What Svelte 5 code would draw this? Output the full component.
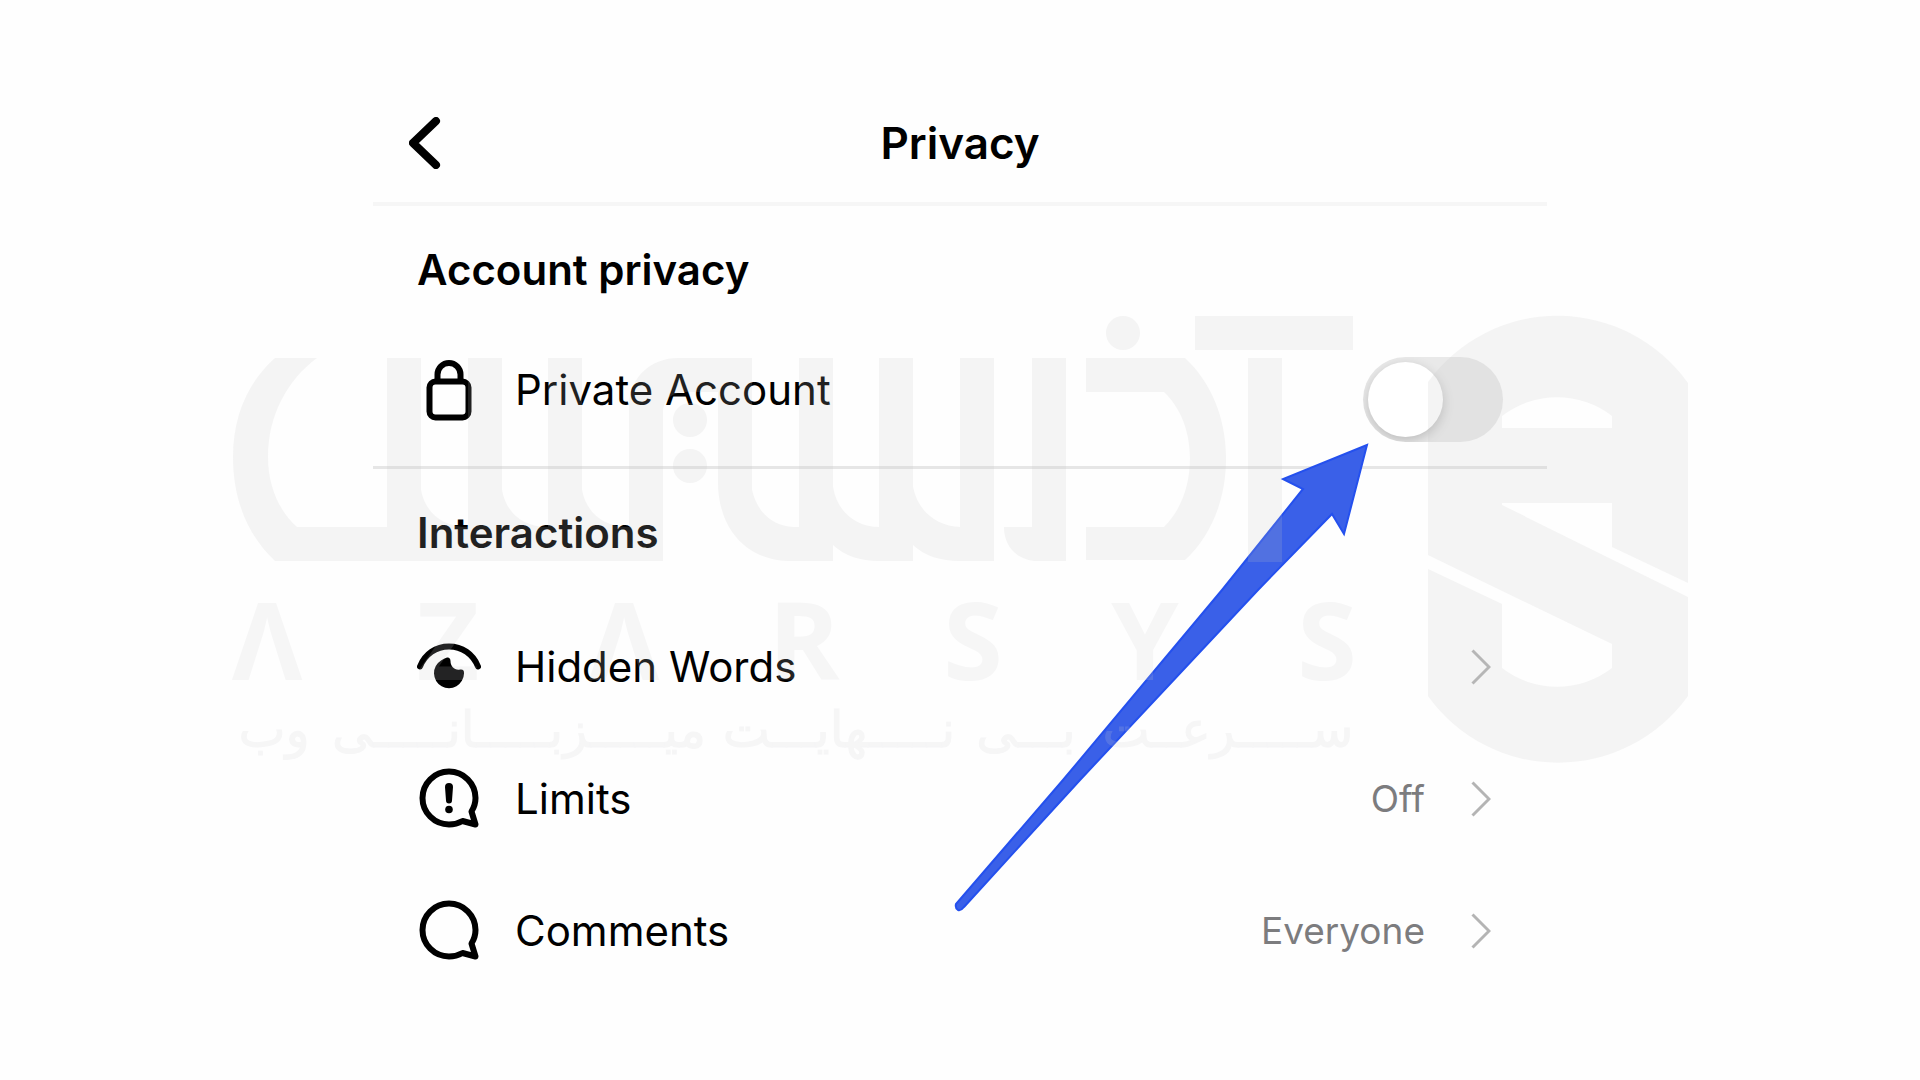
<script>
  let isPrivate = $state(false);

  const rows = [
    { icon: 'eye', label: 'Hidden Words', value: '' },
    { icon: 'limits', label: 'Limits', value: 'Off' },
    { icon: 'comment', label: 'Comments', value: 'Everyone' }
  ];

  const letters = [
    { ch: 'Λ', x: 267 },
    { ch: 'Z', x: 448 },
    { ch: 'Λ', x: 624 },
    { ch: 'R', x: 804 },
    { ch: 'S', x: 973 },
    { ch: 'Y', x: 1145 },
    { ch: 'S', x: 1327 }
  ];

  const tagline = [
    { word: 'ســـــرعــت', x: 1228 },
    { word: 'بـــی', x: 1026 },
    { word: 'نـــــهایـــت', x: 839 },
    { word: 'میـــــزبـــــانـــــی', x: 519 },
    { word: 'وب', x: 274 }
  ];
</script>

<main class="page">
  <div class="screen">
    <header class="bar">
      <button class="back" type="button" aria-label="Back">
        <svg width="32" height="52" viewBox="0 0 32 52" aria-hidden="true">
          <path d="M27 4L4 26L27 48" />
        </svg>
      </button>
      <h1>Privacy</h1>
    </header>

    <section class="account">
      <h2>Account privacy</h2>
      <div class="row toggle-row">
        <span class="icon">
          <svg width="64" height="64" viewBox="0 0 64 64" aria-hidden="true">
            <rect x="12.500" y="23.500" width="39" height="36" rx="6" />
            <path d="M20.500 23V16.500a11.500 11.500 0 0 1 23 0V23" />
          </svg>
        </span>
        <label class="label" for="private">Private Account</label>
        <input id="private" class="switch" type="checkbox" role="switch" bind:checked={isPrivate} />
      </div>
    </section>

    <section>
      <h2>Interactions</h2>
      {#each rows as row}
        <a class="row" href="#{row.icon}">
          <span class="icon">
            <svg width="64" height="64" viewBox="0 0 64 64" aria-hidden="true">
              {#if row.icon === 'eye'}
                <path d="M3 31.500C8 19 19 11.500 32 11.500S56 19 61 31.500" />
                <path
                  class="solid"
                  d="M30 22.500C32 22 33.500 23.500 33.500 26C33.500 32 38 35.500 43 34.500C46 34 47.300 35.500 47 38.500A15 15 0 1 1 24 25.500C26 24 28 23 30 22.500z"
                />
              {:else}
                <path
                  d="M54.500 44.500C57 40.500 58.500 36.500 58.500 31A26.500 26.500 0 1 0 32 57.500c5 0 9-1 13.500-3.500L58.500 57.500z"
                />
              {/if}
              {#if row.icon === 'limits'}
                <path class="solid" d="M28 20a4 4 0 0 1 8 0L35 33.500a3 3 0 0 1-6 0z" />
                <circle class="solid" cx="32" cy="42.500" r="3.800" />
              {/if}
            </svg>
          </span>
          <span class="label">{row.label}</span>
          <span class="value">{row.value}</span>
          <svg class="chevron" width="20" height="36" viewBox="0 0 20 36" aria-hidden="true">
            <path d="M1.500 1.500L18 18L1.500 34.500" />
          </svg>
        </a>
      {/each}
    </section>

    <svg class="arrow" width="420" height="480" viewBox="950 438 420 480" aria-hidden="true">
      <path
        d="M1367 445L1283 479L1303 489L1222 590L1063 780L956 904Q955 908 958 910Q961 911 964 907L1080 780L1258 590L1332 514L1344 534Z"
      />
    </svg>
  </div>

  <div class="watermark" aria-hidden="true">
    <svg viewBox="232 312 1456 456">
      <g class="mark">
        <path
          d="M275 358H317C287 380 268 416 268 457C268 486 279 511 297 527H387V358H421V490C425 512 442 527 468 527V358H502V490C506 512 522 527 548 527V358H582V490C586 512 603 527 629 527V404C631 377 650 358 679 358H752V490C757 512 772 526 793 527H799V358H833V487C837 512 856 527 879 527V358H913V487C918 512 937 526 960 527V358H994V561H960C941 561 925 556 913 545V561H879C861 561 845 556 833 545V561H788C746 560 718 528 718 482V392H686C672 392 663 400 663 412V561H275C248 536 233 500 233 457C233 416 248 382 275 358Z"
        />
        <circle cx="690" cy="420" r="17" />
        <circle cx="690" cy="466" r="17" />
        <path d="M1032 358H1066V561H1038C1018 561 1004 547 1004 527H1032Z" />
        <circle cx="1123" cy="333" r="17" />
        <path
          d="M1086 358H1185C1211 382 1226 418 1226 458C1226 500 1211 536 1185 560H1086V527H1164C1181 510 1190 486 1190 458C1190 432 1181 408 1164 392H1086Z"
        />
        <path d="M1248 358H1282V562H1248Z" />
        <path d="M1195 316H1353V350H1195Z" />
        <path
          fill-rule="evenodd"
          d="M1428 382A160 160 0 0 1 1688 383V583L1612 547V503H1502V505L1688 597V696A160 160 0 0 1 1428 696V569L1502 604V668A90 90 0 0 0 1612 668V644L1428 555ZM1502 416V428H1612V416A90 90 0 0 0 1502 416Z"
        />
      </g>
      <g class="mark wordmark">
        {#each letters as l}
          <text x={l.x} y="680">{l.ch}</text>
        {/each}
      </g>
      <g class="mark tagline">
        {#each tagline as t}
          <text x={t.x} y="747">{t.word}</text>
        {/each}
      </g>
    </svg>
  </div>
</main>

<style>
  :global(body) {
    background: #fefefe;
  }

  .page {
    position: relative;
    min-height: 100vh;
    box-sizing: border-box;
    overflow: hidden;
    font-family: Inter, 'Liberation Sans', sans-serif;
    color: #000;
  }

  .screen {
    position: relative;
    max-width: 1174px;
    margin: 0 auto;
  }

  .bar {
    display: grid;
    grid-template-columns: 1fr auto 1fr;
    align-items: center;
    height: 118px;
    padding: 84px 36px 0;
    border-bottom: 4px solid #f6f6f6;
  }

  .back {
    justify-self: start;
    display: flex;
    padding: 0;
    border: 0;
    background: none;
    cursor: pointer;
  }

  .back path {
    fill: none;
    stroke: #000;
    stroke-width: 8;
    stroke-linecap: round;
    stroke-linejoin: round;
  }

  h1,
  h2 {
    margin: 0;
    font-weight: 600;
  }

  h1 {
    font-size: 44px;
    line-height: 56px;
  }

  h2 {
    padding: 0 44px 4px;
    font-size: 42px;
    line-height: 128px;
  }

  .account {
    padding-bottom: 24px;
    border-bottom: 3px solid #e6e6e6;
  }

  .row {
    display: flex;
    align-items: center;
    height: 132px;
    padding: 0 56px 0 44px;
    color: inherit;
    text-decoration: none;
  }

  .toggle-row {
    height: 104px;
    padding-right: 44px;
  }

  .icon {
    display: flex;
    margin-right: 34px;
  }

  .icon path,
  .icon rect {
    fill: none;
    stroke: #000;
    stroke-width: 6;
    stroke-linecap: round;
    stroke-linejoin: round;
  }

  .icon .solid {
    fill: #000;
    stroke: none;
  }

  .label {
    flex: 1;
    font-size: 42px;
    line-height: 56px;
  }

  .value {
    margin-right: 46px;
    font-size: 37px;
    line-height: 56px;
    color: #7c7c7e;
  }

  .chevron path {
    fill: none;
    stroke: #b4b4b4;
    stroke-width: 3;
  }

  .switch {
    appearance: none;
    align-self: flex-end;
    display: flex;
    align-items: center;
    width: 140px;
    height: 85px;
    margin: 0;
    padding: 0 5px;
    box-sizing: border-box;
    border-radius: 43px;
    background: #e9e9e9;
    overflow: hidden;
    cursor: pointer;
  }

  .switch::before {
    content: '';
    width: 75px;
    height: 75px;
    border-radius: 50%;
    background: #fff;
    box-shadow: 0 4px 12px #00000030;
  }

  .switch:checked {
    justify-content: flex-end;
    background: #34c759;
  }

  .arrow {
    position: absolute;
    top: 438px;
    right: 177px;
    pointer-events: none;
  }

  .arrow path {
    fill: #3a60e8;
    stroke: #2450ee;
    stroke-width: 2;
  }

  .watermark {
    position: absolute;
    top: 312px;
    left: 0;
    right: 0;
    max-width: 1456px;
    margin: 0 auto;
    pointer-events: none;
  }

  .watermark svg {
    display: block;
    width: 100%;
  }

  .mark {
    fill: #c4c4c4;
    opacity: 0.17;
  }

  .wordmark {
    font: 700 108px 'Open Sans', 'Noto Sans', sans-serif;
    text-anchor: middle;
    fill: #d0d0d2;
  }

  .tagline {
    font: 400 50px 'DejaVu Sans', sans-serif;
    text-anchor: middle;
    fill: #d0d0d4;
    stroke: #d0d0d4;
    stroke-width: 1;
  }
</style>
